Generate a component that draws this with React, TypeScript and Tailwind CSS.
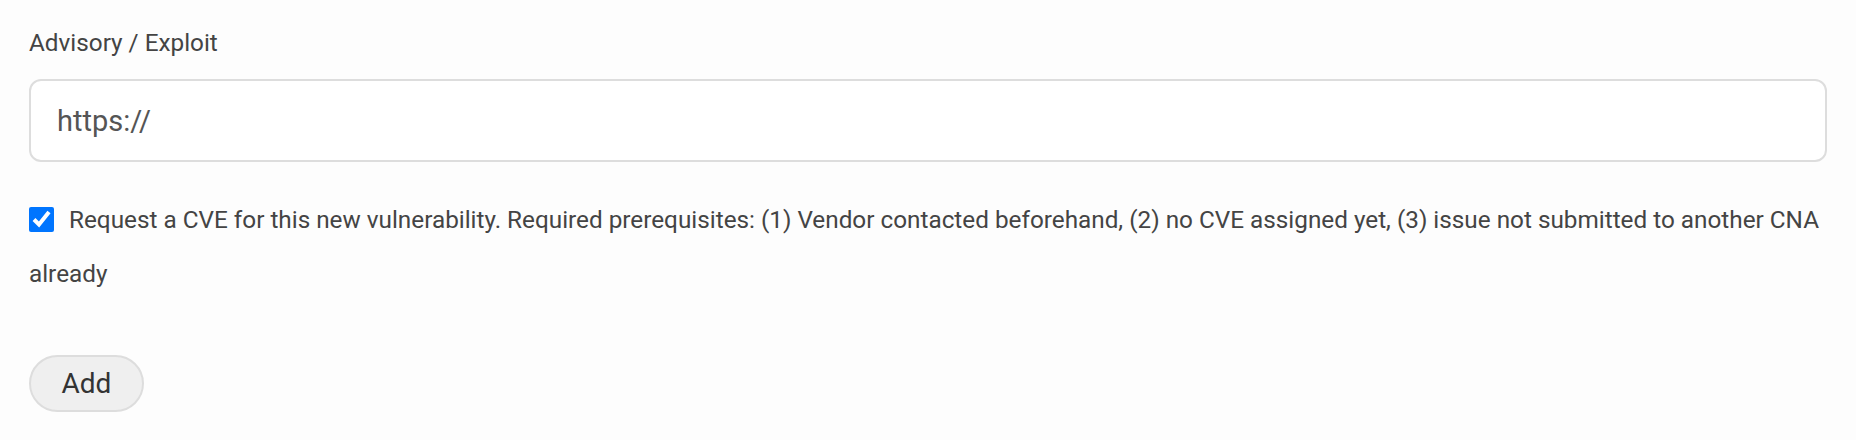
export default function App() {
  return (
    <div className="min-h-screen bg-[#fdfdfd] px-[29px] pt-[26px] font-['Roboto',sans-serif] text-[#444]">
      <label className="block text-[24.3px] leading-[33px]">Advisory / Exploit</label>
      <input
        type="text"
        defaultValue="https://"
        className="mt-[20px] block h-[83px] w-full rounded-[12px] border-2 border-[#dddddd] bg-white px-[26px] text-[29px] text-[#555] outline-none"
      />
      <div className="mt-[31px] text-[24.3px] leading-[54px]">
        <input
          type="checkbox"
          defaultChecked
          className="mr-[15px] inline-block h-[25px] w-[25px] align-[-4px] accent-[#0075ff]"
        />
        Request a CVE for this new vulnerability. Required prerequisites: (1) Vendor contacted beforehand, (2) no CVE
        assigned yet, (3) issue not submitted to another CNA already
      </div>
      <button className="mt-[54px] h-[57px] w-[115px] rounded-full border-2 border-[#dddddd] bg-[#efefef] text-[28px] text-[#333]">
        Add
      </button>
    </div>
  );
}
